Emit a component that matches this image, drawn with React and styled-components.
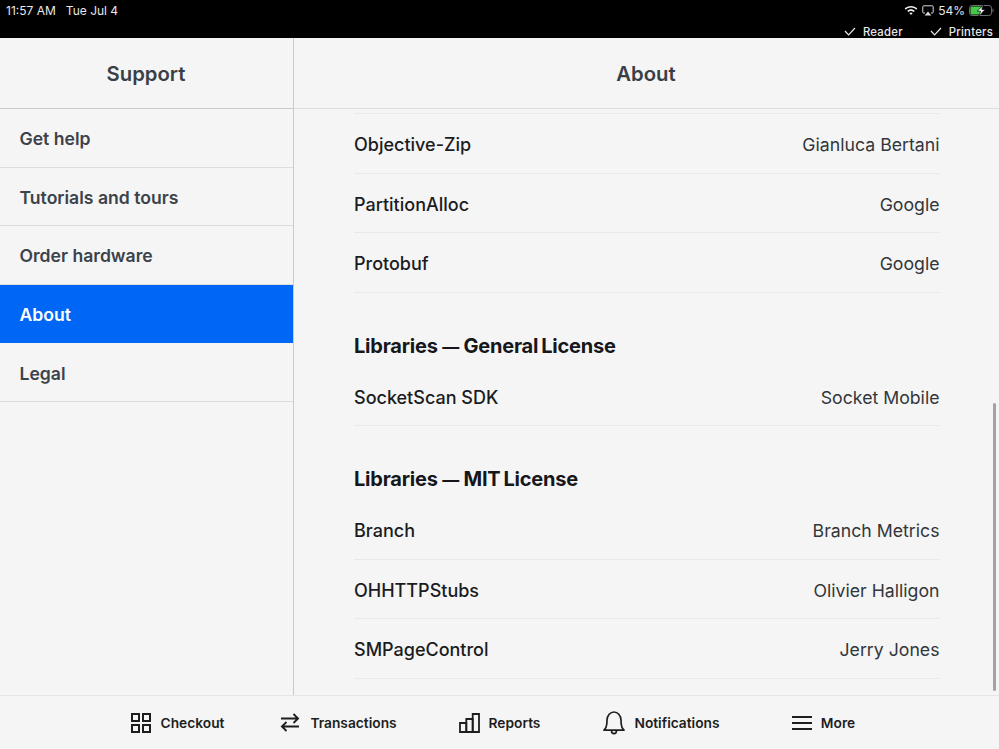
import React from "react";
import styled, { createGlobalStyle } from "styled-components";

const GlobalStyle = createGlobalStyle`
  html, body {
    margin: 0;
    padding: 0;
    background: #f5f5f6;
  }
  * {
    box-sizing: border-box;
  }
`;

const Page = styled.div`
  width: 999px;
  height: 749px;
  display: flex;
  flex-direction: column;
  overflow: hidden;
  position: relative;
  background: #f5f5f6;
  font-family: Inter, "Liberation Sans", sans-serif;
  color: #1b1c1e;
`;

const StatusBar = styled.div`
  height: 38px;
  flex: none;
  background: #000;
  color: #e8e8e8;
  padding: 1.5px 5px 0 6px;
  display: flex;
  flex-direction: column;
`;

const StatusLine = styled.div`
  display: flex;
  flex: none;
  justify-content: space-between;
  align-items: center;
  height: 17px;
  font-size: 12px;
  line-height: 17px;
`;

const StatusGroup = styled.div`
  display: flex;
  align-items: center;
  gap: ${({ $gap }) => $gap || 10}px;
`;

const ReaderLine = styled.div`
  display: flex;
  flex: none;
  justify-content: flex-end;
  align-items: center;
  gap: 27px;
  height: 15px;
  margin-top: 5.5px;
  padding-right: 1px;
  font-size: 11.3px;
  font-weight: 500;
  letter-spacing: 0.25px;
`;

const ReaderItem = styled.div`
  display: flex;
  align-items: center;
  gap: 7px;
`;

const Columns = styled.div`
  flex: 1;
  display: flex;
  min-height: 0;
`;

const Sidebar = styled.div`
  width: 294px;
  flex: none;
  border-right: 1px solid #c9cacc;
  display: flex;
  flex-direction: column;
`;

const Content = styled.div`
  flex: 1;
  display: flex;
  flex-direction: column;
  min-width: 0;
`;

const Header = styled.div`
  height: 71px;
  flex: none;
  display: flex;
  align-items: center;
  justify-content: center;
  border-bottom: 1px solid ${({ $strong }) => ($strong ? "#cbcccd" : "#dcddde")};
  font-size: 20.3px;
  font-weight: 600;
  color: #3a3f45;
  padding: 1px 1px 0 0;
`;

const SideItem = styled.div`
  height: 58.6px;
  display: flex;
  align-items: center;
  padding: 2px 0 0 19.5px;
  font-size: 17.6px;
  font-weight: 600;
  color: ${({ $active }) => ($active ? "#fff" : "#3c4249")};
  background: ${({ $active }) => ($active ? "#0066f5" : "transparent")};
  border-bottom: 1px solid ${({ $active }) => ($active ? "#0066f5" : "#dcddde")};
`;

const List = styled.div`
  flex: 1;
  min-height: 0;
  overflow: hidden;
  padding: 4px 59px 0 60px;
`;

const TopRule = styled.div`
  height: 1px;
  background: #e9e9ea;
`;

const Row = styled.div`
  height: 59.5px;
  display: flex;
  justify-content: space-between;
  align-items: center;
  padding-top: 3px;
  border-bottom: 1px solid #e9e9ea;
  font-size: 18px;
`;

const RowName = styled.span`
  font-weight: 500;
  color: #1b1c1e;
`;

const RowOwner = styled.span`
  font-size: 17.7px;
  margin-right: 0.5px;
  color: #33363a;
`;

const SectionTitle = styled.div`
  height: 74px;
  padding-top: 39px;
  font-size: 20px;
  line-height: 28px;
  font-weight: 700;
  letter-spacing: -0.22px;
  word-spacing: -1.5px;
  color: #16171a;
`;

const Dash = styled.span`
  font-size: 17px;
  margin: 0 1.5px;
`;

const ScrollThumb = styled.div`
  position: absolute;
  left: 993px;
  top: 403px;
  width: 3px;
  height: 288px;
  border-radius: 2px;
  background: #a3a3a5;
`;

const TabBar = styled.div`
  height: 54px;
  flex: none;
  border-top: 1px solid #e6e6e7;
  display: grid;
  grid-template-columns: repeat(5, 161px);
  justify-content: center;
`;

const Tab = styled.div`
  display: flex;
  align-items: center;
  justify-content: center;
  gap: ${({ $gap }) => $gap || 10}px;
  padding-left: ${({ $nudge }) => $nudge || 0}px;
  font-size: 13.75px;
  font-weight: 600;
  color: #1d1e20;
`;

const CheckIcon = () => (
  <svg width="12" height="9" viewBox="0 0 12 9" fill="none" stroke="#e8e8e8" strokeWidth="1.2">
    <path d="M1 4l3.6 3.8L11 1" />
  </svg>
);

const WifiIcon = () => (
  <svg width="14" height="11" viewBox="0 0 14 11" fill="#efefef">
    <path d="M7 1C4.500 1 2.300 2 .7 3.600l1.100 1.200C3.100 3.400 5 2.600 7 2.600s3.900.8 5.200 2.200l1.100-1.200C11.700 2 9.500 1 7 1z" />
    <path d="M7 4.300c-1.500 0-2.800.6-3.800 1.600l1.100 1.200c.7-.7 1.700-1.200 2.700-1.200s2 .5 2.700 1.200l1.100-1.200c-1-1-2.300-1.600-3.800-1.600z" />
    <path d="M7 7.400c-.7 0-1.300.3-1.700.7L7 10l1.700-1.900c-.4-.4-1-.7-1.700-.7z" />
  </svg>
);

const AirplayIcon = () => (
  <svg width="12" height="11" viewBox="0 0 12 11" fill="none">
    <path d="M3 8H1.600a.8.8 0 0 1-.8-.8V1.600a.8.8 0 0 1 .8-.8h8.800a.8.8 0 0 1 .8.8v5.600a.8.8 0 0 1-.8.8H9" stroke="#d8d8d8" strokeWidth="1" />
    <path d="M6 6.500l3.400 4H2.600z" fill="#d8d8d8" />
  </svg>
);

const BatteryIcon = () => (
  <svg width="25" height="11" viewBox="0 0 25 11">
    <rect x="0.5" y="0.5" width="22" height="10" rx="2.600" fill="none" stroke="#6e6e6e" />
    <rect x="1.500" y="1.500" width="11.500" height="8" rx="1.500" fill="#46c84a" />
    <path d="M23.500 3.600c.8.3 1.200 1 1.200 1.900s-.4 1.600-1.200 1.900z" fill="#6e6e6e" />
    <path d="M14.500 0L8.200 6.200h3.400L9.800 11l6.400-6.600h-3.400z" fill="#fff" stroke="#000" strokeWidth="0.7" />
  </svg>
);

const GridIcon = () => (
  <svg width="20" height="20" viewBox="0 0 20 20" fill="none" stroke="#1d1e20" strokeWidth="2">
    <rect x="1" y="1" width="7" height="7" />
    <rect x="12" y="1" width="7" height="7" />
    <rect x="1" y="12" width="7" height="7" />
    <rect x="12" y="12" width="7" height="7" />
  </svg>
);

const ArrowsIcon = () => (
  <svg width="20" height="19" viewBox="0 0 20 19" fill="none" stroke="#1d1e20" strokeWidth="1.800">
    <path d="M1 5.500h17M13.500 1l4.600 4.500-4.600 4.500" />
    <path d="M19 13.500H2M6.500 9l-4.600 4.500L6.500 18" />
  </svg>
);

// staircase of three bars that share their walls
const BarsIcon = () => (
  <svg width="21" height="20" viewBox="0 0 21 20" fill="none" stroke="#1d1e20" strokeWidth="1.800">
    <path d="M1 10h6.300v9H1z" />
    <path d="M7.300 6h6.400v13H7.300z" />
    <path d="M13.700 1H20v18h-6.300z" />
  </svg>
);

const BellIcon = () => (
  <svg width="22" height="24" viewBox="0 0 22 24" fill="none" stroke="#1d1e20" strokeWidth="1.700">
    <path d="M1 19.200c2-1.600 2.600-3.200 2.800-6.200l.2-4C4.300 4.400 7.200 1 11 1s6.700 3.400 7 8l.2 4c.2 3 .8 4.600 2.800 6.200z" strokeLinejoin="round" />
    <path d="M8.500 19.500c0 2 1 3.200 2.500 3.200s2.500-1.200 2.500-3.200" />
  </svg>
);

const MenuIcon = () => (
  <svg width="20" height="16" viewBox="0 0 20 16" stroke="#1d1e20" strokeWidth="1.900">
    <path d="M0 2h20M0 8h20M0 14h20" />
  </svg>
);

const sideItems = ["Get help", "Tutorials and tours", "Order hardware", "About", "Legal"];

const sections = [
  {
    rows: [
      ["Objective-Zip", "Gianluca Bertani"],
      ["PartitionAlloc", "Google"],
      ["Protobuf", "Google"],
    ],
  },
  {
    title: "General License",
    rows: [["SocketScan SDK", "Socket Mobile"]],
  },
  {
    title: "MIT License",
    rows: [
      ["Branch", "Branch Metrics"],
      ["OHHTTPStubs", "Olivier Halligon"],
      ["SMPageControl", "Jerry Jones"],
    ],
  },
];

const tabs = [
  { label: "Checkout", icon: <GridIcon /> },
  { label: "Transactions", icon: <ArrowsIcon /> },
  { label: "Reports", icon: <BarsIcon />, gap: 9 },
  { label: "Notifications", icon: <BellIcon />, gap: 9, nudge: 2 },
  { label: "More", icon: <MenuIcon />, gap: 9, nudge: 4 },
];

const App = () => {
  return (
    <Page>
      <GlobalStyle />
      <StatusBar>
        <StatusLine>
          <StatusGroup>
            <span>11:57 AM</span>
            <span>Tue Jul 4</span>
          </StatusGroup>
          <StatusGroup $gap={4}>
            <WifiIcon />
            <AirplayIcon />
            <span>54%</span>
            <BatteryIcon />
          </StatusGroup>
        </StatusLine>
        <ReaderLine>
          <ReaderItem>
            <CheckIcon />
            Reader
          </ReaderItem>
          <ReaderItem>
            <CheckIcon />
            Printers
          </ReaderItem>
        </ReaderLine>
      </StatusBar>
      <Columns>
        <Sidebar>
          <Header $strong>Support</Header>
          {sideItems.map((item) => (
            <SideItem key={item} $active={item === "About"}>
              {item}
            </SideItem>
          ))}
        </Sidebar>
        <Content>
          <Header>About</Header>
          <List>
            <TopRule />
            {sections.map((section, i) => (
              <div key={i}>
                {section.title && (
                  <SectionTitle>
                    Libraries <Dash>—</Dash> {section.title}
                  </SectionTitle>
                )}
                {section.rows.map(([name, owner]) => (
                  <Row key={name}>
                    <RowName>{name}</RowName>
                    <RowOwner>{owner}</RowOwner>
                  </Row>
                ))}
              </div>
            ))}
          </List>
        </Content>
      </Columns>
      <TabBar>
        {tabs.map((tab) => (
          <Tab key={tab.label} $gap={tab.gap} $nudge={tab.nudge}>
            {tab.icon}
            {tab.label}
          </Tab>
        ))}
      </TabBar>
      <ScrollThumb />
    </Page>
  );
};

export default App;
